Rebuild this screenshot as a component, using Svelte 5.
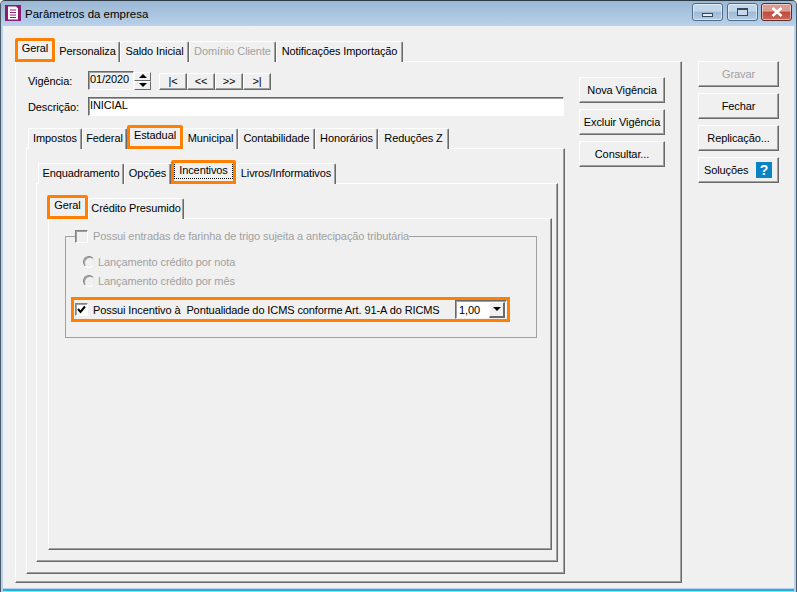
<script lang="ts">
	const mainTabs = [
		{ label: 'Geral', w: 40, active: true },
		{ label: 'Personaliza', w: 65 },
		{ label: 'Saldo Inicial', w: 69 },
		{ label: 'Domínio Cliente', w: 87, disabled: true },
		{ label: 'Notificações Importação', w: 127 }
	];
	const taxTabs = [
		{ label: 'Impostos', w: 54 },
		{ label: 'Federal', w: 45 },
		{ label: 'Estadual', w: 56, active: true },
		{ label: 'Municipal', w: 55 },
		{ label: 'Contabilidade', w: 77 },
		{ label: 'Honorários', w: 63 },
		{ label: 'Reduções Z', w: 71 }
	];
	const stateTabs = [
		{ label: 'Enquadramento', w: 86 },
		{ label: 'Opções', w: 47 },
		{ label: 'Incentivos', w: 65, active: true, focused: true },
		{ label: 'Livros/Informativos', w: 100 }
	];
	const incentiveTabs = [
		{ label: 'Geral', w: 41, active: true },
		{ label: 'Crédito Presumido', w: 96 }
	];
	const navButtons = ['|<', '<<', '>>', '>|'];
</script>

{#snippet tabRow(list)}
	<div class="tabs">
		{#each list as tab}
			<div class="tab" class:active={tab.active} class:disabled={tab.disabled} style="width: {tab.w}px">
				<span class:focused={tab.focused}>{tab.label}</span>
			</div>
		{/each}
	</div>
{/snippet}

<div class="window">
	<header class="titlebar">
		<svg class="app-icon" viewBox="0 0 16 16">
			<rect width="16" height="16" fill="#8e1b73" />
			<path d="M3 1.5h8l2 2v11H3z" fill="#fff" />
			<path d="M5 5h6M5 7.5h6M5 10h6M5 12.5h6" stroke="#8e1b73" stroke-width="1" />
		</svg>
		<span class="title">Parâmetros da empresa</span>
		<div class="controls">
			<button class="ctl"><i class="min"></i></button>
			<button class="ctl"><i class="max"></i></button>
			<button class="ctl close">
				<svg viewBox="0 0 12 10" width="12" height="10">
					<path d="M1.5 1 10.5 9M10.5 1 1.5 9" stroke="#fff" stroke-width="2.6" />
				</svg>
			</button>
		</div>
	</header>

	<div class="client">
		<div class="left">
			{@render tabRow(mainTabs)}
			<div class="panel outer">
				<div class="outer-left">
					<div class="row first">
						<label for="vig">Vigência:</label>
						<div class="spin">
							<input id="vig" class="field date" value="01/2020" />
							<div class="spin-btns">
								<button class="arrow"><i class="up"></i></button>
								<button class="arrow"><i class="down"></i></button>
							</div>
						</div>
						<div class="nav">
							{#each navButtons as b}
								<button class="btn navbtn">{b}</button>
							{/each}
						</div>
					</div>
					<div class="row second">
						<label for="desc">Descrição:</label>
						<input id="desc" class="field desc" value="INICIAL" />
					</div>

					<div class="level2">
						{@render tabRow(taxTabs)}
						<div class="panel p2">
							{@render tabRow(stateTabs)}
							<div class="panel p3">
								{@render tabRow(incentiveTabs)}
								<div class="panel p4">
									<fieldset>
										<legend>
											<span class="check disabled"></span>
											<span>Possui entradas de farinha de trigo sujeita a antecipação tributária</span>
										</legend>
										<div class="radio-row"><span class="radio"></span>Lançamento crédito por nota</div>
										<div class="radio-row"><span class="radio"></span>Lançamento crédito por mês</div>
										<div class="punctual">
											<span class="check">
												<svg viewBox="0 0 11 11" width="11" height="11">
													<path d="M2 5 4.5 8 9 2.5" fill="none" stroke="#000" stroke-width="2" />
												</svg>
											</span>
											<span class="punctual-text">Possui Incentivo à&nbsp; Pontualidade do ICMS conforme Art. 91-A do RICMS</span>
											<div class="combo">
												<span>1,00</span>
												<button class="arrow drop"><i class="down"></i></button>
											</div>
										</div>
									</fieldset>
								</div>
							</div>
						</div>
					</div>
				</div>

				<div class="outer-actions">
					<button class="btn action">Nova Vigência</button>
					<button class="btn action">Excluir Vigência</button>
					<button class="btn action">Consultar...</button>
				</div>
			</div>
		</div>

		<aside class="side">
			<button class="btn sidebtn" disabled>Gravar</button>
			<button class="btn sidebtn">Fechar</button>
			<button class="btn sidebtn">Replicação...</button>
			<button class="btn sidebtn help">Soluções <b class="q">?</b></button>
		</aside>
	</div>
</div>

<style>
	:global(body) {
		margin: 0;
		background: #f0f0f0;
	}

	.window {
		width: 797px;
		height: 592px;
		box-sizing: border-box;
		display: flex;
		flex-direction: column;
		overflow: hidden;
		background: #b9d1ea;
		border: 1px solid #4a5a68;
		border-top-color: #2c3a46;
		border-bottom: 0;
		border-radius: 5px 5px 0 0;
		font-family: 'Liberation Sans', Arial, sans-serif;
		font-size: 11px;
		letter-spacing: -0.1px;
		color: #000;
	}

	.titlebar {
		flex: none;
		height: 25px;
		display: flex;
		align-items: center;
		padding: 0 4px;
		background: linear-gradient(#9ab7d3, #b9d1ea);
	}

	.app-icon {
		width: 16px;
		height: 16px;
		margin-top: -1px;
	}

	.title {
		margin-left: 4px;
		font-size: 11.5px;
		letter-spacing: 0;
	}

	.controls {
		margin-left: auto;
		display: flex;
		gap: 3.5px;
		margin-bottom: 3px;
	}

	.ctl {
		width: 31px;
		height: 18px;
		padding: 0;
		display: flex;
		align-items: center;
		justify-content: center;
		border: 1px solid #4f6a86;
		border-radius: 3px;
		background: linear-gradient(#c2d6ea 0 45%, #9db9d6 50%, #b4cde6);
		box-shadow: inset 0 0 0 1px rgba(255, 255, 255, 0.5);
	}

	.ctl.close {
		border-color: #5e2a25;
		background: linear-gradient(#dd9c90 0 45%, #bf4a3d 50%, #c9675c);
	}

	.min {
		width: 11px;
		height: 4px;
		margin-top: 5px;
		background: #e8eef5;
		border: 1px solid #36485c;
		box-sizing: border-box;
	}

	.max {
		width: 11px;
		height: 8px;
		box-sizing: border-box;
		border: 1px solid #36485c;
		border-top-width: 2px;
		background: #c6d9ec;
	}

	.client {
		flex: 1;
		display: flex;
		margin: 0 2px 3px;
		background: #f0f0f0;
		padding: 12px 0 0 12px;
		box-sizing: border-box;
		border-bottom: 1px solid #b9d1ea;
		box-shadow: 0 2px 0 #22aee0;
	}

	.left {
		width: 667px;
		flex: none;
	}

	.tabs {
		display: flex;
		align-items: flex-end;
		height: 24px;
		margin-bottom: -1px;
		flex: none;
	}

	.tab {
		flex: none;
		box-sizing: border-box;
		height: 21px;
		display: flex;
		align-items: center;
		justify-content: center;
		white-space: nowrap;
		background: #f0f0f0;
		border-top: 1px solid #fff;
		border-left: 1px solid #fff;
		border-right: 1px solid #696969;
		box-shadow: inset -1px 0 0 #a0a0a0;
		border-radius: 2px 2px 0 0;
		padding-bottom: 2px;
		position: relative;
	}

	.tab.active {
		height: 24px;
		z-index: 1;
		border: 0;
		box-shadow: none;
		outline: 3px solid #ff8000;
		outline-offset: -3px;
		padding-bottom: 4px;
	}

	.tab.disabled {
		color: #a0a0a0;
	}

	.focused {
		padding: 2px 4px;
		outline: 1px dotted #000;
	}

	.panel {
		box-sizing: border-box;
		border: 1px solid;
		border-color: #fff #696969 #696969 #fff;
		box-shadow: inset -1px -1px 0 #a0a0a0;
		background: #f0f0f0;
	}

	.outer {
		height: 522px;
		display: flex;
	}

	.outer-left {
		width: 549px;
		flex: none;
		display: flex;
		flex-direction: column;
		padding-left: 10px;
		box-sizing: border-box;
	}

	.outer-actions {
		display: flex;
		flex-direction: column;
		gap: 6px;
		margin-left: 14px;
		padding-top: 15px;
	}

	.row {
		display: flex;
		align-items: center;
		padding-left: 2px;
	}

	.row.first {
		margin-top: 9px;
		height: 19px;
	}

	.row.second {
		margin-top: 7px;
		height: 19px;
	}

	label {
		width: 60px;
		flex: none;
	}

	.first label {
		padding-top: 1px;
	}

	.spin {
		display: flex;
		align-items: center;
	}

	.field {
		box-sizing: border-box;
		height: 19px;
		padding: 0 1px 3px;
		margin: 0;
		font: inherit;
		letter-spacing: inherit;
		color: #000;
		background: #fff;
		border: 1px solid;
		border-color: #696969 #fff #fff #696969;
		box-shadow: inset 1px 1px 0 #a0a0a0;
		outline: none;
	}

	.date {
		width: 46px;
		background: #f0f0f0;
	}

	.desc {
		width: 476px;
	}

	.spin-btns {
		display: flex;
		flex-direction: column;
	}

	.arrow {
		box-sizing: border-box;
		width: 17px;
		height: 9px;
		padding: 0;
		display: flex;
		align-items: center;
		justify-content: center;
		background: #f0f0f0;
		border: 1px solid;
		border-color: #fff #696969 #696969 #fff;
	}

	.up,
	.down {
		width: 0;
		height: 0;
		border-left: 4px solid transparent;
		border-right: 4px solid transparent;
	}

	.up {
		border-bottom: 4px solid #000;
	}

	.down {
		border-top: 4px solid #000;
	}

	.nav {
		display: flex;
		margin-left: 8px;
		margin-top: 2px;
	}

	.btn {
		box-sizing: border-box;
		padding: 0;
		font: inherit;
		letter-spacing: inherit;
		color: #000;
		background: #f0f0f0;
		border: 1px solid;
		border-color: #fff #696969 #696969 #fff;
		box-shadow: inset -1px -1px 0 #a0a0a0;
		white-space: nowrap;
	}

	.btn:disabled {
		color: #a0a0a0;
	}

	.navbtn {
		width: 28px;
		height: 17px;
		line-height: 13px;
	}

	.action {
		width: 86px;
		height: 26px;
	}

	.level2 {
		flex: 1;
		display: flex;
		flex-direction: column;
		margin-top: 9px;
		margin-bottom: 8px;
	}

	.level2 > .tabs {
		padding-left: 2px;
	}

	.p2 {
		flex: 1;
		display: flex;
		flex-direction: column;
		padding: 11px 6px 11px 9px;
	}

	.p2 > .tabs {
		padding-left: 2px;
	}

	.p3 {
		flex: 1;
		display: flex;
		flex-direction: column;
		padding: 11px 5px 11px 11px;
	}

	.p3 > .tabs {
		margin-left: -1px;
	}

	.p4 {
		flex: 1;
		padding: 10px 14px 0 16px;
	}

	fieldset {
		margin: 0;
		padding: 0 0 16px;
		height: 109px;
		box-sizing: border-box;
		border: 1px solid #a0a0a0;
		min-width: 0;
	}

	legend {
		display: flex;
		align-items: center;
		gap: 5px;
		margin-left: 9px;
		padding: 0;
		height: 14px;
		color: #a0a0a0;
		white-space: nowrap;
	}

	.check {
		flex: none;
		box-sizing: border-box;
		width: 13px;
		height: 13px;
		display: inline-flex;
		border: 1px solid;
		border-color: #808080 #fff #fff #808080;
		background: #fff;
		box-shadow: inset 1px 1px 0 #a0a0a0;
	}

	.check.disabled {
		background: #f0f0f0;
	}

	.radio-row {
		display: flex;
		align-items: center;
		gap: 3px;
		height: 19px;
		margin-left: 17px;
		color: #a0a0a0;
	}

	.radio-row:first-of-type {
		margin-top: 9px;
	}

	.radio {
		box-sizing: border-box;
		width: 12px;
		height: 12px;
		border-radius: 50%;
		border: 1px solid;
		border-color: #808080 #e8e8e8 #fff #808080;
		background: #f0f0f0;
		box-shadow: inset 1px 1px 0 #a0a0a0;
	}

	.punctual {
		display: flex;
		align-items: center;
		box-sizing: border-box;
		width: 439px;
		height: 25px;
		margin: 7px 0 0 5px;
		padding: 0 0 0 1px;
		border: 3px solid #ff8000;
	}

	.punctual-text {
		margin-left: 5px;
		white-space: nowrap;
	}

	.combo {
		margin-left: auto;
		box-sizing: border-box;
		width: 52px;
		height: 19px;
		display: flex;
		align-items: center;
		justify-content: space-between;
		background: #fff;
		border: 1px solid;
		border-color: #696969 #f0f0f0 #f0f0f0 #696969;
		box-shadow: inset 1px 1px 0 #a0a0a0;
		padding-left: 3px;
	}

	.drop {
		height: 16px;
		width: 16px;
		border-width: 1px 2px 2px 1px;
		margin-right: 1px;
	}

	.side {
		flex: none;
		width: 81px;
		margin-left: 16px;
		padding-top: 23px;
		display: flex;
		flex-direction: column;
		gap: 6px;
	}

	.sidebtn {
		width: 81px;
		height: 26px;
	}

	.help {
		display: flex;
		align-items: center;
		justify-content: space-between;
		padding: 0 6px 0 5px;
	}

	.q {
		width: 16px;
		height: 16px;
		background: #0a83c6;
		color: #fff;
		font-size: 14px;
		line-height: 16px;
		text-align: center;
	}
</style>
